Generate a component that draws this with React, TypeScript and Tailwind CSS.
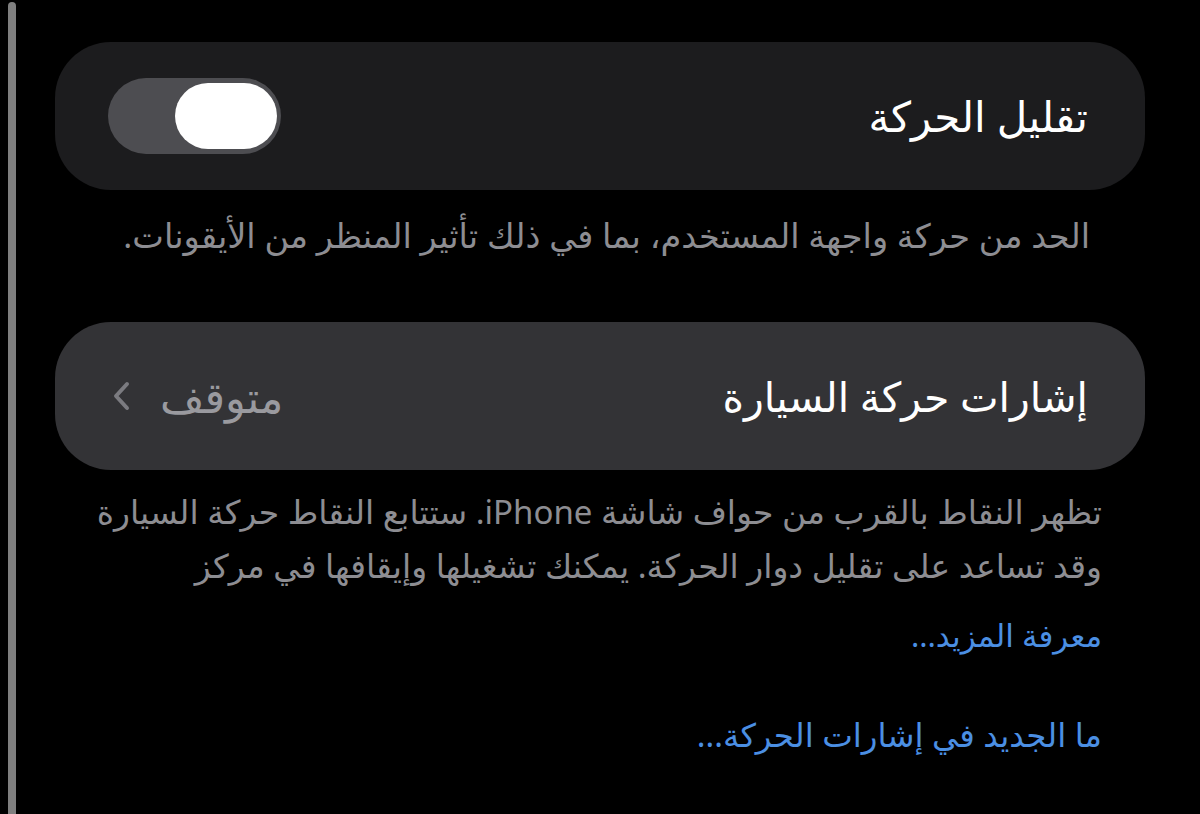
const arabic = { fontFamily: '"Noto Sans", "DejaVu Sans", sans-serif' }

function Toggle() {
    return (
        <div className="flex h-[76px] w-[173px] items-center justify-start rounded-full bg-[#4d4d51] px-[4px]">
            <div className="h-[66px] w-[102px] rounded-full bg-white" />
        </div>
    )
}

function Chevron() {
    return (
        <svg width="18" height="30" viewBox="0 0 18 30" fill="none">
            <polyline points="15,3 4,15 15,27" stroke="#7b7b80" strokeWidth="4" strokeLinecap="round" strokeLinejoin="round" />
        </svg>
    )
}

export default function App() {
    return (
        <div className="flex h-[814px] w-[1200px] overflow-hidden bg-black" style={arabic}>
            <div className="ml-[8px] mt-[2px] w-[8px] rounded-t-full bg-[#7f7f7f]" />

            <div dir="rtl" className="ml-[39px] mr-[55px] flex flex-1 flex-col">
                <div className="mt-[42px] flex h-[148px] items-center justify-between rounded-[56px] bg-[#1c1c1e] pl-[53px] pr-[57px]">
                    <span className="text-[42px] leading-none text-white">تقليل الحركة</span>
                    <Toggle />
                </div>

                <p className="mt-[26px] pr-[55px] text-[33.6px] leading-[38px] text-[#8d8d92]">
                    الحد من حركة واجهة المستخدم، بما في ذلك تأثير المنظر من الأيقونات.
                </p>

                <div className="mt-[68px] flex h-[148px] items-center justify-between rounded-[56px] bg-[#333336] pl-[57px] pr-[57px]">
                    <span className="text-[41px] leading-none text-white">إشارات حركة السيارة</span>
                    <div className="flex items-center gap-[30px]">
                        <span className="text-[43px] leading-none text-[#9a9a9f]">متوقف</span>
                        <Chevron />
                    </div>
                </div>

                <p className="mt-[15px] pr-[43px] text-[33px] leading-[54px] text-[#8d8d92]">
                    تظهر النقاط بالقرب من حواف شاشة iPhone. ستتابع النقاط حركة السيارة
                    <br />
                    وقد تساعد على تقليل دوار الحركة. يمكنك تشغيلها وإيقافها في مركز
                </p>

                <a className="mt-[15px] pr-[43px] text-[31px] leading-[54px] tracking-[-1px] text-[#4b8fe3]">معرفة المزيد...</a>
                <a className="mt-[46px] pr-[43px] text-[32.5px] leading-[54px] tracking-[-0.3px] text-[#4b8fe3]">ما الجديد في إشارات الحركة...</a>
            </div>
        </div>
    )
}
